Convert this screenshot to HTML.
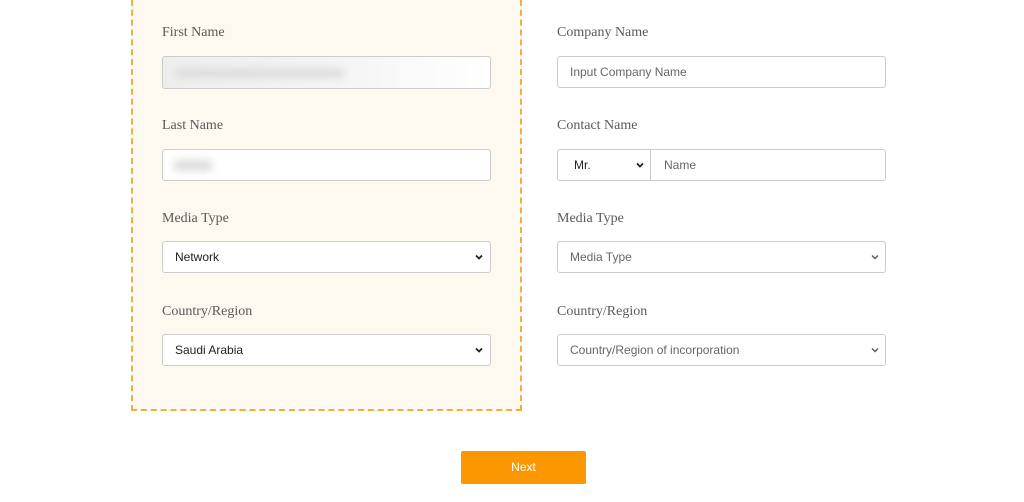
<!DOCTYPE html>
<html><head><style>
body{margin:0;width:1024px;height:502px;background:#fff;position:relative;overflow:hidden;font-family:"Liberation Sans",sans-serif}
.box{position:absolute;left:131px;top:-10px;width:387px;height:417px;border:2px dashed #eeb13e;background:#fdf8f0}
.lbl{position:absolute;font-family:"Liberation Serif",serif;font-size:14px;color:#5a5a5a}
.in{position:absolute;height:32px;border:1px solid #ccc;border-radius:3px;background:#fff;box-sizing:border-box;font-size:12px;color:#333;line-height:30px;padding-left:12px}
.ph{color:#666}
.chev{position:absolute;right:6px;top:11px;width:8px;height:8px}
.btn{position:absolute;left:461px;top:451px;width:125px;height:33px;background:#fb9800;border-radius:2px;color:#fff;font-size:12px;text-align:center;line-height:33px}
.blur{position:absolute;background:#ddd;filter:blur(4px);border-radius:6px}
</style></head><body>
<div class="box"></div>
<div class="lbl" style="left:162px;top:25px">First Name</div>
<div class="in" style="left:162px;top:56px;width:329px;height:33px;background:linear-gradient(90deg,#eee,#f6f6f6 60%,#fff)"><div class="blur" style="left:12px;top:11px;width:170px;height:10px"></div></div>
<div class="lbl" style="left:162px;top:118px">Last Name</div>
<div class="in" style="left:162px;top:149px;width:329px"><div class="blur" style="left:10px;top:10px;width:40px;height:11px"></div></div>
<div class="lbl" style="left:162px;top:211px">Media Type</div>
<div class="in" style="left:162px;top:241px;width:329px;color:#222">Network<svg class="chev" viewBox="0 0 8 8" style="right:7px"><path d="M1 2.5L4 5.5 7 2.5" stroke="#222" stroke-width="1.8" fill="none"/></svg></div>
<div class="lbl" style="left:162px;top:304px">Country/Region</div>
<div class="in" style="left:162px;top:334px;width:329px;color:#222">Saudi Arabia<svg class="chev" viewBox="0 0 8 8" style="right:7px"><path d="M1 2.5L4 5.5 7 2.5" stroke="#222" stroke-width="1.8" fill="none"/></svg></div>

<div class="lbl" style="left:557px;top:25px">Company Name</div>
<div class="in ph" style="left:557px;top:56px;width:329px">Input Company Name</div>
<div class="lbl" style="left:557px;top:118px">Contact Name</div>
<div class="in" style="left:557px;top:149px;width:329px;padding:0">
<div style="position:absolute;left:0;top:0;width:93px;height:30px;border-right:1px solid #ccc;padding-left:16px;box-sizing:border-box;color:#222">Mr.<svg class="chev" viewBox="0 0 8 8" style="right:6px"><path d="M1 2.5L4 5.5 7 2.5" stroke="#222" stroke-width="1.8" fill="none"/></svg></div>
<div class="ph" style="position:absolute;left:106px;top:0">Name</div></div>
<div class="lbl" style="left:557px;top:211px">Media Type</div>
<div class="in ph" style="left:557px;top:241px;width:329px">Media Type<svg class="chev" viewBox="0 0 8 8" style="right:6px"><path d="M1 2.5L4 5.5 7 2.5" stroke="#555" stroke-width="1.4" fill="none"/></svg></div>
<div class="lbl" style="left:557px;top:304px">Country/Region</div>
<div class="in ph" style="left:557px;top:334px;width:329px">Country/Region of incorporation<svg class="chev" viewBox="0 0 8 8" style="right:6px"><path d="M1 2.5L4 5.5 7 2.5" stroke="#555" stroke-width="1.4" fill="none"/></svg></div>
<div class="btn">Next</div>
</body></html>
